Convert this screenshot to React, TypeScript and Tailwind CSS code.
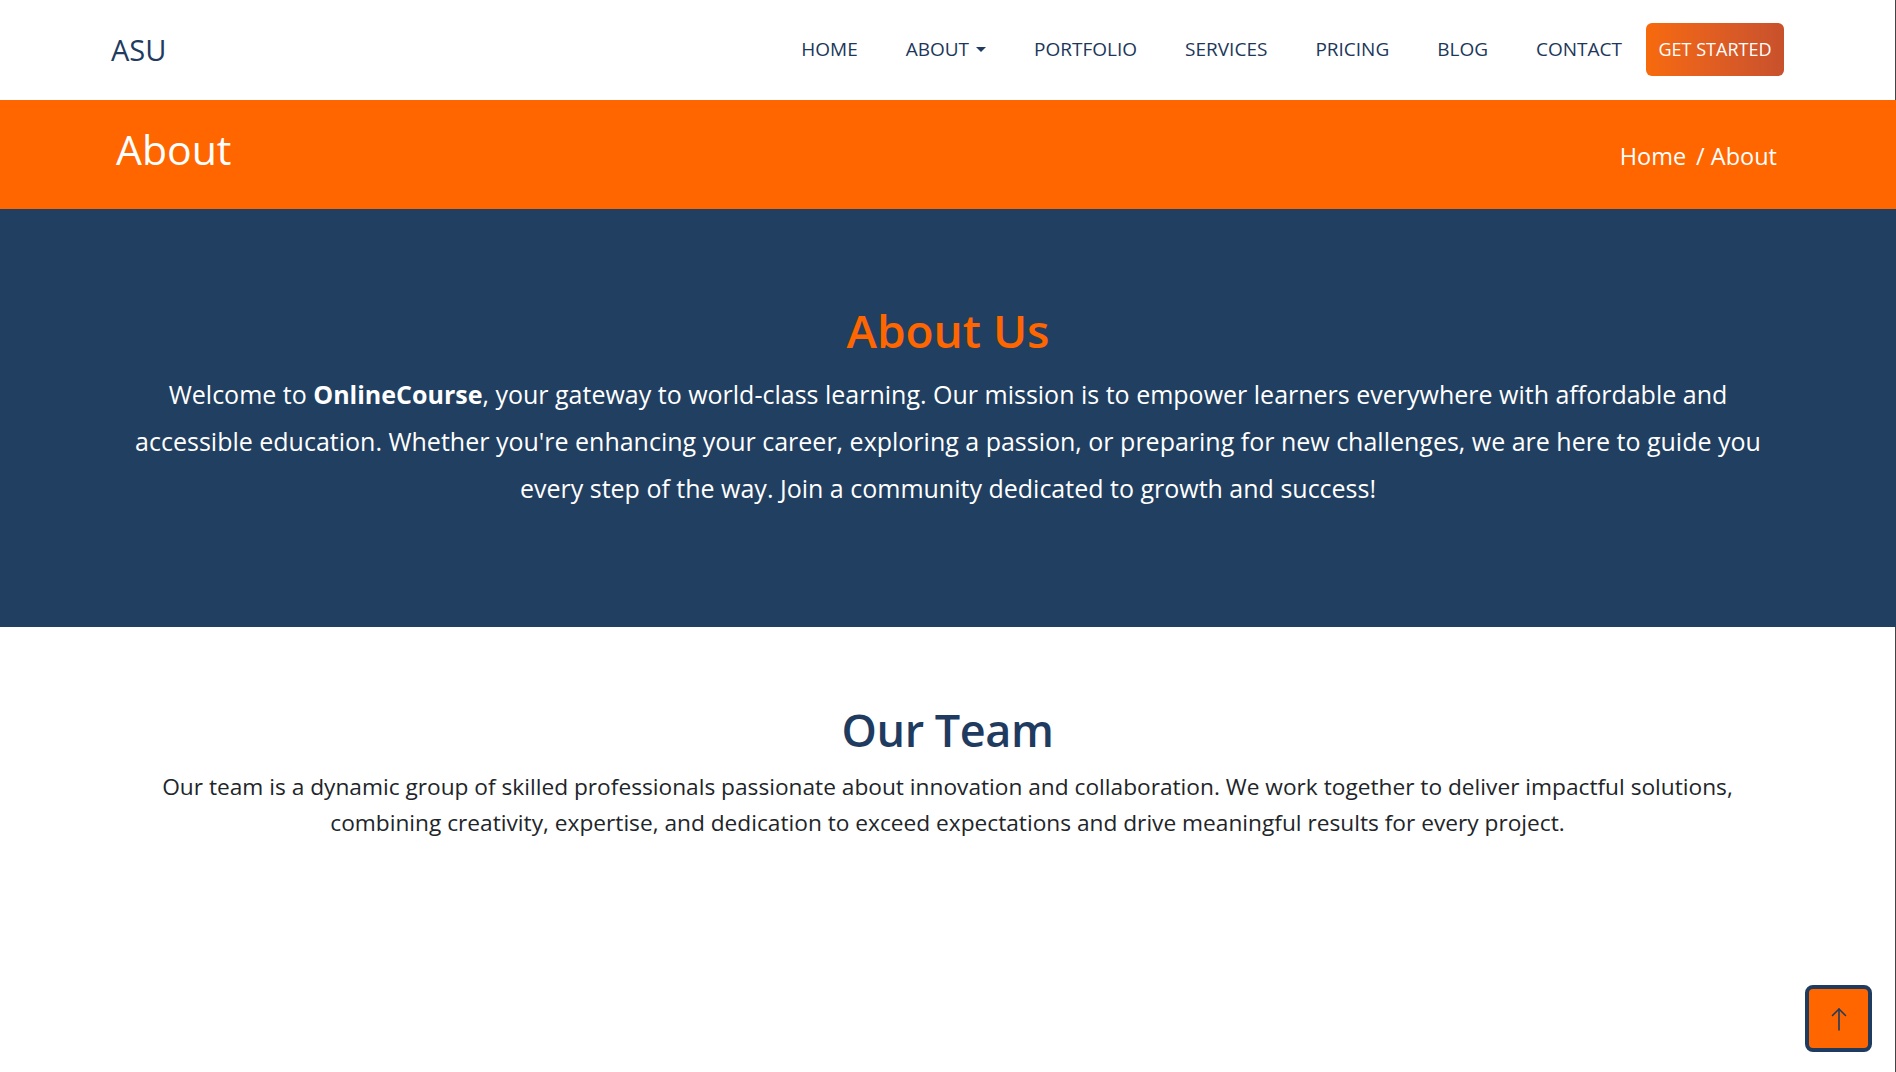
import React from "react";

const font = { fontFamily: '"Open Sans", "Noto Sans", sans-serif' };

function Caret() {
  return <span className="ml-[7px] inline-block h-0 w-0 border-x-[5px] border-t-[5px] border-x-transparent border-t-[#1f3b5f] align-middle" />;
}

export default function App() {
  const links = ["HOME", "ABOUT", "PORTFOLIO", "SERVICES", "PRICING", "BLOG", "CONTACT"];
  return (
    <div className="relative min-h-[1072px] w-full bg-white" style={font}>
      <header className="flex h-[100px] items-center justify-between border-r border-[#444] bg-white px-[111px]">
        <div className="mt-[-2px] text-[29px] leading-none text-[#1f3b5f]">ASU</div>
        <nav className="mt-[-2px] flex items-center">
          <ul className="flex items-center gap-[48px]">
            {links.map((l) => (
              <li key={l} className="flex items-center text-[19px] font-medium text-[#1c375a]">
                {l}
                {l === "ABOUT" && <Caret />}
              </li>
            ))}
          </ul>
          <button className="ml-[24px] h-[53px] w-[138px] rounded-[6px] bg-gradient-to-r from-[#f76a0b] to-[#c8512c] text-[18px] text-white">
            GET STARTED
          </button>
        </nav>
      </header>

      <section className="flex h-[109px] items-center justify-between bg-[#ff6600] px-[116px] text-white">
        <h1 className="mt-[-10px] text-[41px] leading-none">About</h1>
        <div className="mt-[4px] mr-[3px] text-[23.5px]">
          <span>Home</span>
          <span className="ml-[10px]">/ About</span>
        </div>
      </section>

      <section className="bg-[#213f61] pt-[92px] pb-[115px] text-center">
        <h2 className="text-[46px] font-semibold leading-[58px] text-[#ff6600]">About Us</h2>
        <p className="mt-[12px] text-[25px] leading-[47px] text-white">
          <span className="block whitespace-nowrap">
            Welcome to <strong className="font-bold">OnlineCourse</strong>, your gateway to world-class learning. Our mission is to empower learners everywhere with affordable and
          </span>
          <span className="block whitespace-nowrap">
            accessible education. Whether you're enhancing your career, exploring a passion, or preparing for new challenges, we are here to guide you
          </span>
          <span className="block whitespace-nowrap">every step of the way. Join a community dedicated to growth and success!</span>
        </p>
      </section>

      <section className="h-[446px] border-r border-[#444] pt-[74px] text-center">
        <h2 className="text-[45px] font-semibold leading-[58px] tracking-[-0.01em] text-[#1f3b5f]">Our Team</h2>
        <p className="mt-[10px] text-[22.7px] leading-[36px] text-[#212529]">
          <span className="block whitespace-nowrap">
            Our team is a dynamic group of skilled professionals passionate about innovation and collaboration. We work together to deliver impactful solutions,
          </span>
          <span className="block whitespace-nowrap">
            combining creativity, expertise, and dedication to exceed expectations and drive meaningful results for every project.
          </span>
        </p>
      </section>

      <button className="absolute left-[1805px] top-[985px] flex h-[67px] w-[67px] items-center justify-center rounded-[8px] border-[4px] border-[#1f3b5f] bg-[#ff6600]">
        <svg width="22" height="26" viewBox="0 0 22 26" fill="none" stroke="#1f3b5f" strokeWidth="1.6" strokeLinecap="round" strokeLinejoin="round">
          <path d="M11 24V3" />
          <path d="M4.5 9.5L11 3l6.5 6.5" />
        </svg>
      </button>
    </div>
  );
}
